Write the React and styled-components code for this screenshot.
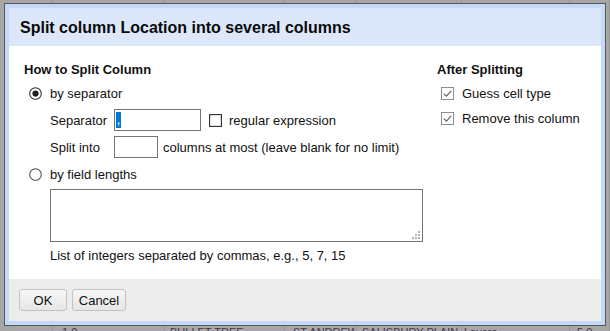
import React from "react";
import styled, { createGlobalStyle } from "styled-components";

const Global = createGlobalStyle`
  html, body { margin: 0; padding: 0; }
  body {
    background: #a6a6a6;
    font-family: "Liberation Sans", Arial, sans-serif;
    overflow: hidden;
    width: 610px;
    height: 331px;
  }
`;

const Page = styled.div`
  position: relative;
  width: 610px;
  height: 331px;
  overflow: hidden;
`;

const Sheet = styled.div`
  display: flex;
  flex-direction: column;
`;

const SheetRow = styled.div`
  display: grid;
  grid-template-columns: 53px 112px 120px 72px 105px 108px 40px;
  height: ${(p) => p.$h || 23}px;
`;

const Cell = styled.div`
  border-right: 1px solid #979797;
  padding: 4px 0 0 ${(p) => p.$pad || 5}px;
  font-size: 11px;
  line-height: 13px;
  color: #3c3c3c;
  white-space: nowrap;
  overflow: hidden;
`;

const Dialog = styled.div`
  position: absolute;
  left: 4px;
  top: 3px;
  width: 602px;
  box-sizing: border-box;
  border: 1px solid #55595f;
`;

const Inner = styled.div`
  border: 4px solid #c4d9f6;
  display: flex;
  flex-direction: column;
  height: 313px;
`;

const Header = styled.div`
  height: 38px;
  box-sizing: border-box;
  padding-top: 1px;
  background: #dce8f9;
  padding-left: 11px;
  display: flex;
  align-items: center;
  font-weight: bold;
  font-size: 16px;
  color: #0a0a0a;
`;

const Body = styled.div`
  height: 233px;
  box-sizing: border-box;
  background: #fff;
  padding: 16px 0 0 15px;
  display: flex;
  color: #111;
  font-size: 13px;
`;

const LeftCol = styled.div`
  width: 413px;
  display: flex;
  flex-direction: column;
`;

const RightCol = styled.div`
  display: flex;
  flex-direction: column;
`;

const Heading = styled.div`
  font-weight: bold;
  font-size: 13px;
  height: 16px;
  line-height: 16px;
`;

const OptionRow = styled.div`
  display: flex;
  align-items: center;
  height: 22px;
  margin-top: ${(p) => p.$mt || 0}px;
  padding-left: ${(p) => p.$indent || 0}px;
  gap: ${(p) => p.$gap || 8}px;
`;

const FieldRow = styled.div`
  display: flex;
  align-items: center;
  height: 24px;
  margin-top: ${(p) => p.$mt || 0}px;
  padding-left: 26px;
`;

const FieldLabel = styled.span`
  width: 64px;
`;

const TextBox = styled.div`
  width: ${(p) => p.$w}px;
  height: 22px;
  box-sizing: border-box;
  border: 1px solid #767676;
  background: #fff;
  display: flex;
  align-items: center;
  padding-left: 1px;
  margin-right: ${(p) => p.$mr || 0}px;
`;

const Selected = styled.span`
  background: #0078d7;
  color: #fff;
  display: inline-block;
  width: 5px;
  height: 16px;
  line-height: 16px;
  font-size: 13px;
  text-align: center;
`;

const Inline = styled.span`
  display: flex;
  align-items: center;
  gap: 7px;
`;

const TextArea = styled.div`
  position: relative;
  margin: 4px 0 0 26px;
  width: 373px;
  height: 53px;
  box-sizing: border-box;
  border: 1px solid #767676;
`;

const Grip = styled.svg`
  position: absolute;
  right: 2px;
  bottom: 2px;
`;

const Help = styled.div`
  margin: 6px 0 0 26px;
  height: 16px;
  line-height: 16px;
`;

const Footer = styled.div`
  height: 42px;
  box-sizing: border-box;
  background: #ececec;
  padding: 10px 0 0 10px;
  display: flex;
  gap: 5px;
  align-items: flex-start;
`;

const Button = styled.button`
  height: 22px;
  width: ${(p) => p.$w}px;
  box-sizing: border-box;
  border: 1px solid #c2c2c2;
  border-radius: 3px;
  background: linear-gradient(#f6f6f6, #e6e6e6);
  font-family: "Liberation Sans", Arial, sans-serif;
  font-size: 13px;
  color: #111;
  padding: 0;
`;

const Radio = ({ checked }) => (
  <svg width="13" height="13" viewBox="0 0 13 13" style={{ marginLeft: 5, flex: "none" }}>
    <circle cx="6.5" cy="6.5" r="5.8" fill="#fff" stroke={checked ? "#333" : "#555"} strokeWidth="1.1" />
    {checked && <circle cx="6.5" cy="6.5" r="3.1" fill="#1e1e1e" />}
  </svg>
);

const Check = ({ checked }) => (
  <svg width="13" height="13" viewBox="0 0 13 13" style={{ flex: "none" }}>
    <rect x="0.5" y="0.5" width="12" height="12" fill="#fff" stroke={checked ? "#8e8e8e" : "#333"} strokeWidth={checked ? 1 : 1.3} />
    {checked && <path d="M2.8 6.6 L5.4 9.1 L10.2 3.8" fill="none" stroke="#5c5c5c" strokeWidth="1.1" />}
  </svg>
);

export default function App() {
  const rows = Array.from({ length: 14 });
  return (
    <Page>
      <Global />
      <Sheet>
        {rows.map((_, i) => (
          <SheetRow key={i}>
            {Array.from({ length: 7 }).map((__, j) => <Cell key={j} />)}
          </SheetRow>
        ))}
        <SheetRow>
          <Cell />
          <Cell $pad={9}>1.0</Cell>
          <Cell>BULLET TREE</Cell>
          <Cell $pad={8}>ST ANDREW</Cell>
          <Cell>SALISBURY PLAIN</Cell>
          <Cell $pad={2}>Layers</Cell>
          <Cell $pad={7}>5.0</Cell>
        </SheetRow>
      </Sheet>
      <Dialog>
        <Inner>
          <Header>Split column Location into several columns</Header>
          <Body>
            <LeftCol>
              <Heading>How to Split Column</Heading>
              <OptionRow $mt={4}>
                <Radio checked />
                <span>by separator</span>
              </OptionRow>
              <FieldRow $mt={4}>
                <FieldLabel>Separator</FieldLabel>
                <TextBox $w={87} $mr={8}>
                  <Selected>,</Selected>
                </TextBox>
                <Inline>
                  <Check />
                  <span>regular expression</span>
                </Inline>
              </FieldRow>
              <FieldRow $mt={3}>
                <FieldLabel>Split into</FieldLabel>
                <TextBox $w={44} $mr={5} />
                <span>columns at most (leave blank for no limit)</span>
              </FieldRow>
              <OptionRow $mt={4}>
                <Radio />
                <span>by field lengths</span>
              </OptionRow>
              <TextArea>
                <Grip width="8" height="8" viewBox="0 0 8 8">
                  <rect x="6" y="0" width="2" height="2" fill="#b5b5b5" />
                  <rect x="3" y="3" width="2" height="2" fill="#b5b5b5" />
                  <rect x="6" y="3" width="2" height="2" fill="#b5b5b5" />
                  <rect x="0" y="6" width="2" height="2" fill="#b5b5b5" />
                  <rect x="3" y="6" width="2" height="2" fill="#b5b5b5" />
                  <rect x="6" y="6" width="2" height="2" fill="#b5b5b5" />
                </Grip>
              </TextArea>
              <Help>List of integers separated by commas, e.g., 5, 7, 15</Help>
            </LeftCol>
            <RightCol>
              <Heading>After Splitting</Heading>
              <OptionRow $mt={4} $indent={4}>
                <Check checked />
                <span>Guess cell type</span>
              </OptionRow>
              <OptionRow $mt={3} $indent={4}>
                <Check checked />
                <span>Remove this column</span>
              </OptionRow>
            </RightCol>
          </Body>
          <Footer>
            <Button $w={48}>OK</Button>
            <Button $w={54}>Cancel</Button>
          </Footer>
        </Inner>
      </Dialog>
    </Page>
  );
}
